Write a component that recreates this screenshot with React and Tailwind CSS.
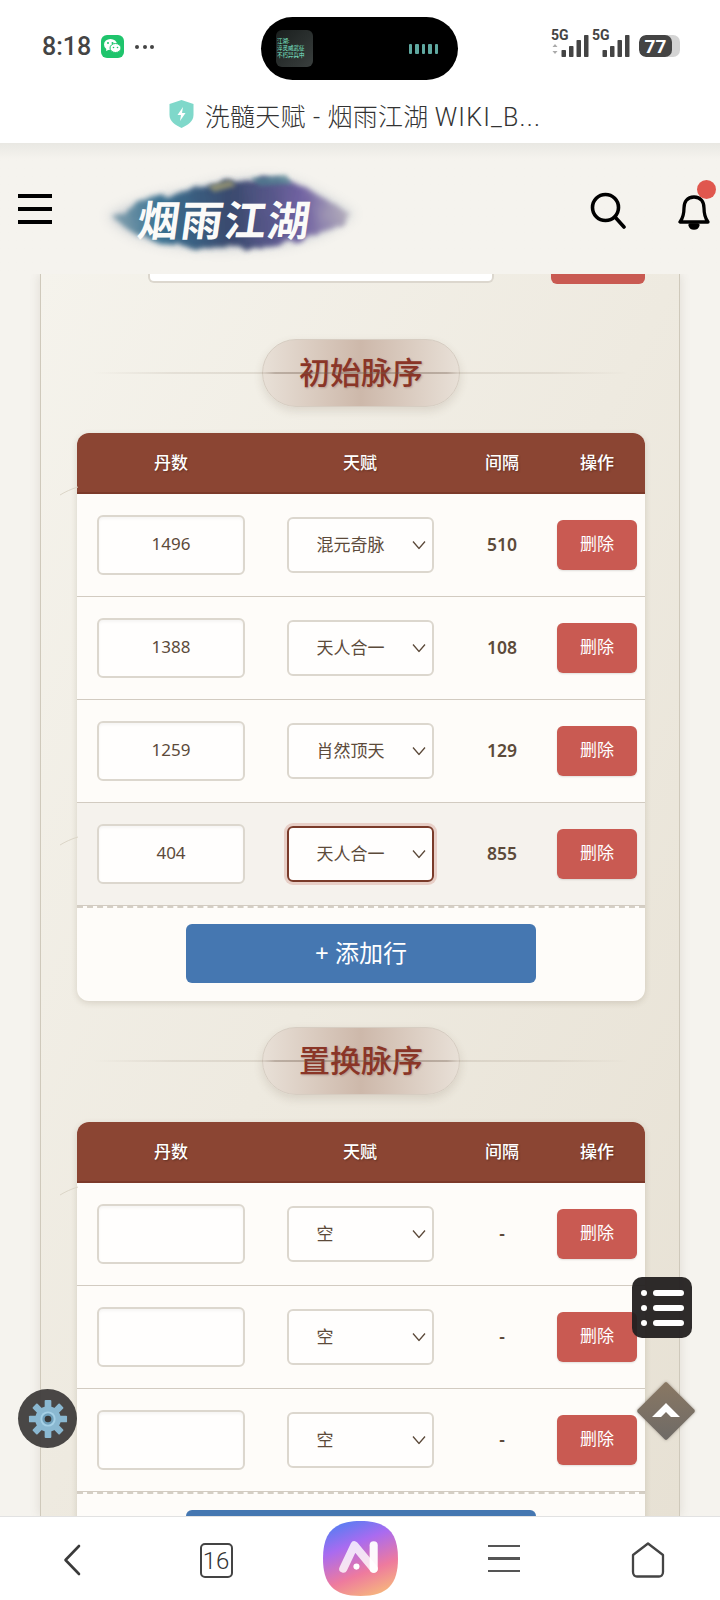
import React from 'react';

const firstRows = [
  { dan: '1496', talent: '混元奇脉', gap: '510' },
  { dan: '1388', talent: '天人合一', gap: '108' },
  { dan: '1259', talent: '肖然顶天', gap: '129' },
  { dan: '404', talent: '天人合一', gap: '855', active: true },
];

const swapRows = [
  { dan: '', talent: '空', gap: '-' },
  { dan: '', talent: '空', gap: '-' },
  { dan: '', talent: '空', gap: '-' },
];

const gridCols = 'grid grid-cols-[188px_190px_94px_96px] items-center';

const StatusBar = () => (
  <div className="grid h-[92px] grid-cols-[261px_197px_1fr] pt-[17px]">
    <div className="flex h-[63px] items-center pl-[42px] pb-[4px]">
      <span className="font-['Roboto',sans-serif] text-[25px] font-medium leading-none text-[#444444]">8:18</span>
      <div className="ml-[10px] flex h-[23px] w-[23px] items-center justify-center rounded-[6px] bg-[#1fc46c]">
        <svg width="19" height="17" viewBox="0 0 19 17">
          <ellipse cx="7.5" cy="6.5" rx="6.5" ry="5.5" fill="#fff" />
          <path d="M3.5 10 L3 13 L6.5 11.5Z" fill="#fff" />
          <ellipse cx="12.5" cy="10" rx="5.5" ry="4.5" fill="#fff" stroke="#1fc46c" strokeWidth="1" />
          <circle cx="5" cy="5" r="1" fill="#1fc46c" />
          <circle cx="9.5" cy="5" r="1" fill="#1fc46c" />
          <circle cx="10.5" cy="9.5" r="0.8" fill="#1fc46c" />
          <circle cx="14.5" cy="9.5" r="0.8" fill="#1fc46c" />
        </svg>
      </div>
      <div className="ml-[11px] flex gap-[3.5px]">
        <span className="h-[4px] w-[4px] rounded-full bg-[#444444]" />
        <span className="h-[4px] w-[4px] rounded-full bg-[#444444]" />
        <span className="h-[4px] w-[4px] rounded-full bg-[#444444]" />
      </div>
    </div>

    <div className="flex h-[63px] items-center justify-between rounded-full bg-black pl-[15px] pr-[20px]">
      <div className="flex h-[37px] w-[37px] flex-col justify-center rounded-[6px] bg-gradient-to-br from-[#1a1f1e] to-[#3a3f3e] pl-[1px] text-[5.5px] leading-[7px] text-[#7ff0d0]">
        <span>江湖:</span>
        <span className="whitespace-nowrap">淬灵威武征</span>
        <span className="whitespace-nowrap">不朽异兵中</span>
      </div>
      <div className="flex gap-[3px]">
        {[0, 1, 2, 3, 4].map((i) => (
          <span key={i} className="h-[10px] w-[3.5px] rounded-[1px] bg-[#5fa8a0]" />
        ))}
      </div>
    </div>

    <div className="relative h-[63px]">
      <svg className="absolute left-[93px] top-[9px]" width="84" height="33" viewBox="0 0 84 33">
        <text x="0" y="14" fontFamily="Roboto, sans-serif" fontSize="14" fontWeight="700" fill="#444">5G</text>
        <path d="M4 18 L6.500 21 L1.500 21Z M4 28 L6.500 25 L1.500 25Z" fill="#aaa" />
        <rect x="10.500" y="24" width="4.500" height="7" rx="0.8" fill="#444" />
        <rect x="18" y="20" width="4.500" height="11" rx="0.8" fill="#444" />
        <rect x="25.500" y="14" width="4.500" height="17" rx="0.8" fill="#444" />
        <rect x="33" y="9" width="4.500" height="22" rx="0.8" fill="#444" />
        <text x="41" y="14" fontFamily="Roboto, sans-serif" fontSize="14" fontWeight="700" fill="#444">5G</text>
        <rect x="51.500" y="24" width="4.500" height="7" rx="0.8" fill="#444" />
        <rect x="59" y="20" width="4.500" height="11" rx="0.8" fill="#444" />
        <rect x="66.500" y="14" width="4.500" height="17" rx="0.8" fill="#444" />
        <rect x="74" y="9" width="4.500" height="22" rx="0.8" fill="#444" />
      </svg>
      <div className="absolute left-[181px] top-[18px] flex h-[22px] w-[41px] overflow-hidden rounded-[7px] bg-[#d4d4d4]">
        <div className="flex w-[33px] items-center justify-center rounded-[7px] bg-[#444444] font-['Roboto',sans-serif] text-[19px] font-bold leading-none text-white">77</div>
      </div>
    </div>
  </div>
);

const TitleBar = () => (
  <div className="flex h-[51px] items-center justify-center bg-white pr-[10px]">
    <svg width="25" height="28" viewBox="0 0 25 28" className="mb-[8px]">
      <path d="M12.5 0 L24.500 4 V15 C24.500 21 19 25 12.500 28 C6 25 0.500 21 0.500 15 V4Z" fill="#7fd8ca" />
      <path d="M14 7 L8.500 15 H12 L11 21 L16.500 13 H13Z" fill="#fff" />
    </svg>
    <span className="ml-[11px] whitespace-nowrap font-['Roboto','Noto_Sans_CJK_SC',sans-serif] text-[25px] font-light leading-none tracking-[0.2px] text-[#333333]">
      洗髓天赋 <span className="mx-[1px]">-</span> 烟雨江湖 <span className="tracking-[1.2px]">WIKI_B...</span>
    </span>
  </div>
);

const Logo = () => (
  <svg width="260" height="85" viewBox="0 0 260 85" className="mt-[7px] overflow-visible">
    <defs>
      <linearGradient id="inkGrad" x1="0" x2="1" y1="0" y2="0">
        <stop offset="0" stopColor="#7d9cab" />
        <stop offset="0.2" stopColor="#2f6a8c" />
        <stop offset="0.5" stopColor="#2e3f66" />
        <stop offset="0.8" stopColor="#6a5a9e" />
        <stop offset="1" stopColor="#b9b3bd" />
      </linearGradient>
      <filter id="inkEdge" x="-10%" y="-30%" width="120%" height="160%">
        <feTurbulence type="fractalNoise" baseFrequency="0.06" numOctaves="3" seed="4" />
        <feDisplacementMap in="SourceGraphic" scale="12" />
        <feGaussianBlur stdDeviation="2.5" />
      </filter>
      <filter id="inkSoft" x="-20%" y="-40%" width="140%" height="180%">
        <feGaussianBlur stdDeviation="6" />
      </filter>
      <filter id="inkTop" x="-20%" y="-40%" width="140%" height="180%">
        <feGaussianBlur stdDeviation="2" />
      </filter>
    </defs>
    <path
      d="M8 46 C30 32 62 24 92 20 C108 12 150 6 184 9 C210 16 232 30 254 44 C230 66 190 78 150 78 C112 82 62 78 32 65 C22 60 12 52 8 46Z"
      fill="#9aa5b4"
      opacity="0.45"
      filter="url(#inkSoft)"
    />
    <path
      d="M12 46 C34 33 62 25 92 21 C108 11 150 3 184 9 C206 17 228 31 250 44 C226 63 190 77 150 77 C112 81 66 77 34 63 C26 57 18 52 12 46Z"
      fill="url(#inkGrad)"
      filter="url(#inkEdge)"
      opacity="0.92"
    />
    <path d="M108 16 L130 10 L136 16 L114 22Z" fill="#9c9a72" opacity="0.8" filter="url(#inkTop)" />
    <path d="M150 8 L186 5 L192 14 L160 16Z" fill="#4f8190" opacity="0.7" filter="url(#inkTop)" />
    <text
      x="36"
      y="66"
      fontFamily="'Noto Sans CJK SC', sans-serif"
      fontSize="42"
      fontWeight="700"
      fill="#fbfaf8"
      textLength="172"
      transform="skewX(-8) translate(9 0)"
    >
      烟雨江湖
    </text>
  </svg>
);

const SiteHeader = () => (
  <div className="relative z-10 flex h-[131px] items-center bg-gradient-to-b from-[#e9e8e3] via-[#f5f3ee] via-[16px] to-[#f5f3ee] pl-[18px]">
    <div className="flex w-[34px] flex-col gap-[9px]">
      <span className="h-[4px] bg-black" />
      <span className="h-[4px] bg-black" />
      <span className="h-[4px] bg-black" />
    </div>
    <div className="ml-[48px]">
      <Logo />
    </div>
    <svg className="ml-[230px] mt-[4px]" width="36" height="37" viewBox="0 0 36 37" fill="none" stroke="#000" strokeWidth="3.600" strokeLinecap="round">
      <circle cx="15.500" cy="15.500" r="13" />
      <path d="M25 25 L34 35" />
    </svg>
    <div className="relative ml-[52px] mt-[6px]">
      <svg width="32" height="36" viewBox="0 0 32 36" fill="none" stroke="#000" strokeWidth="3.300" strokeLinejoin="round">
        <path d="M16 3 C9 3 6 8 6 14 C6 20 5 24 2 28 H30 C27 24 26 20 26 14 C26 8 23 3 16 3Z" />
        <path d="M12 31 C13 35 19 35 20 31Z" fill="#000" />
      </svg>
      <span className="absolute -right-[6px] -top-[14px] h-[19px] w-[19px] rounded-full bg-[#e0574e]" />
    </div>
  </div>
);

const SectionTitle = ({ children, className }) => (
  <div className={`relative flex justify-center ${className}`}>
    <div className="flex h-[68px] w-[198px] items-center justify-center rounded-full border border-[#d6cdc2] bg-gradient-to-r from-[#e8e0d7] via-[#cdb8aa] to-[#e8e0d7] pb-[5px] shadow-[0_4px_10px_rgba(90,70,50,0.14)]">
      <span className="font-['Noto_Sans_CJK_SC',sans-serif] text-[31px] font-medium leading-none text-[#8a3527] [text-shadow:1px_1px_2px_rgba(90,40,30,0.25)]">
        {children}
      </span>
    </div>
    <div className="absolute left-[16px] right-[16px] top-[33px] h-[2px] bg-[linear-gradient(90deg,transparent,rgba(138,122,104,0.14)_15%,rgba(138,122,104,0.18)_32%,rgba(110,90,75,0.35)_34%,rgba(110,90,75,0.35)_66%,rgba(138,122,104,0.18)_68%,rgba(138,122,104,0.14)_85%,transparent)]" />
  </div>
);

const Chevron = () => (
  <svg className="pointer-events-none absolute right-[8px] top-1/2 -translate-y-1/2" width="14" height="9" viewBox="0 0 14 9" fill="none" stroke="#5c4a3a" strokeWidth="1.300">
    <path d="M1 1 L7 8 L13 1" />
  </svg>
);

const Row = ({ row }) => (
  <div className={`${gridCols} h-[103px] border-b border-[#d2cbc1] last:border-b-0 ${row.active ? 'bg-[#f5f2ed]' : ''}`}>
    <input
      type="text"
      defaultValue={row.dan}
      className="h-[60px] w-[148px] justify-self-center rounded-[6px] border-2 border-[#dcd7ce] bg-[#fffefd] pb-[3px] text-center text-[17px] text-[#5c4a3a] shadow-[inset_0_2px_3px_rgba(0,0,0,0.04)] outline-none"
    />
    <div className={`relative h-[56px] w-[147px] justify-self-center rounded-[6px] ${row.active ? 'shadow-[0_0_0_3px_#e8cfc7]' : ''}`}>
      <select
        defaultValue={row.talent}
        className={`h-full w-full appearance-none rounded-[6px] border-2 bg-[#fffefd] pl-[28px] text-[17px] text-[#5c4a3a] outline-none ${row.active ? 'border-[#7a3b2a]' : 'border-[#dcd7ce]'}`}
      >
        <option>{row.talent}</option>
      </select>
      <Chevron />
    </div>
    <div className="pb-[2px] text-center text-[17.500px] font-semibold text-[#5c4a3a]">{row.gap}</div>
    <button className="h-[50px] w-[80px] justify-self-center rounded-[6px] bg-[#c95a52] pb-[2px] text-[17px] text-white shadow-[0_1px_2px_rgba(0,0,0,0.12)]">
      删除
    </button>
  </div>
);

const TalentTable = ({ rows, className }) => (
  <div className={`w-[568px] overflow-hidden rounded-[12px] bg-[#fefcf9] shadow-[0_2px_6px_rgba(80,60,40,0.16)] ${className}`}>
    <div className={`${gridCols} h-[61px] border-b-2 border-[#7c3a2a] bg-[#8b4533] text-center text-[17px] font-medium text-white [text-shadow:1px_1px_2px_rgba(0,0,0,0.3)]`}>
      <span>丹数</span>
      <span>天赋</span>
      <span>间隔</span>
      <span>操作</span>
    </div>
    {rows.map((row, i) => (
      <Row key={i} row={row} />
    ))}
    <div className="flex h-[95px] justify-center border-t-2 border-dashed border-[#d5cfc5] pt-[16px]">
      <button className="h-[59px] w-[350px] rounded-[6px] bg-[#4577b1] pb-[2px] text-[24px] text-white">
        + 添加行
      </button>
    </div>
  </div>
);

const InkMark = ({ className }) => (
  <svg className={`absolute ${className}`} width="20" height="10" viewBox="0 0 20 10" fill="none" stroke="#dcd6c8" strokeWidth="1">
    <path d="M1 9 C6 6 12 3 19 1" />
  </svg>
);

const BottomBar = () => (
  <div className="relative z-10 grid h-[84px] grid-cols-5 items-center justify-items-center border-t border-[#e2e2e2] bg-white">
    <svg width="18" height="32" viewBox="0 0 18 32" fill="none" stroke="#3a3a3a" strokeWidth="2.600" strokeLinecap="round" strokeLinejoin="round" className="mt-[2px]">
      <path d="M16 2 L2.500 16 L16 30" />
    </svg>
    <div className="mt-[4px] flex h-[35px] w-[33px] items-center justify-center rounded-[5px] border-2 border-[#444444] font-['Roboto',sans-serif] text-[24px] font-light leading-none text-[#333333]">
      16
    </div>
    <svg width="75" height="75" viewBox="0 0 74 74">
      <defs>
        <linearGradient id="appGrad" x1="0.3" y1="0" x2="0.7" y2="1">
          <stop offset="0" stopColor="#5b7cf2" />
          <stop offset="0.3" stopColor="#a96bf0" />
          <stop offset="0.68" stopColor="#ee7a9e" />
          <stop offset="1" stopColor="#f6b57e" />
        </linearGradient>
      </defs>
      <path d="M37 0 C64 0 74 12 74 37 C74 62 64 74 37 74 C10 74 0 62 0 37 C0 12 10 0 37 0Z" fill="url(#appGrad)" />
      <path d="M20 47 L31 24 L50 47" fill="none" stroke="#fff" strokeOpacity="0.8" strokeWidth="8" strokeLinecap="round" strokeLinejoin="round" />
      <path d="M50 47 V24" fill="none" stroke="#fff" strokeOpacity="0.95" strokeWidth="8" strokeLinecap="round" />
      <circle cx="33" cy="45" r="3" fill="#fff" />
    </svg>
    <div className="flex w-[32px] flex-col gap-[10px]">
      <span className="h-[2.500px] bg-[#555555]" />
      <span className="h-[2.500px] bg-[#555555]" />
      <span className="h-[2.500px] bg-[#555555]" />
    </div>
    <svg width="34" height="36" viewBox="0 0 34 36" fill="none" stroke="#444" strokeWidth="2.300" strokeLinejoin="round" className="mt-[2px]">
      <path d="M2 13 L17 1.500 L32 13 V30 C32 33 30 34.500 28 34.500 H6 C4 34.500 2 33 2 30Z" />
    </svg>
  </div>
);

const GearButton = () => (
  <div className="absolute left-[18px] top-[1389px] z-20 flex h-[59px] w-[59px] items-center justify-center rounded-full bg-[#3f3d3c]/95">
    <svg width="40" height="40" viewBox="0 0 42 42">
      {[0, 45, 90, 135, 180, 225, 270, 315].map((deg) => (
        <rect key={deg} x="17.500" y="1" width="7" height="10" rx="1" fill="#8ab8d1" transform={`rotate(${deg} 21 21)`} />
      ))}
      <circle cx="21" cy="21" r="13.500" fill="#8ab8d1" />
      <circle cx="21" cy="21" r="8" fill="#a5d0e6" />
      <circle cx="21" cy="21" r="6" fill="#6f9fba" />
      <circle cx="21" cy="21" r="3.500" fill="#3a3a3a" />
    </svg>
  </div>
);

const ListButton = () => (
  <div className="absolute left-[632px] top-[1277px] z-20 flex h-[61px] w-[60px] flex-col justify-center gap-[9px] rounded-[10px] bg-[#232020]/95 pl-[9px]">
    {[0, 1, 2].map((i) => (
      <div key={i} className="flex items-center gap-[6px]">
        <span className="h-[6px] w-[6px] rounded-full bg-white" />
        <span className="h-[6px] w-[31px] rounded-full bg-white" />
      </div>
    ))}
  </div>
);

const TopButton = () => (
  <div className="absolute left-[636px] top-[1381px] z-20 flex h-[60px] w-[60px] items-center justify-center">
    <div className="absolute h-[42px] w-[42px] rotate-45 rounded-[2px] bg-gradient-to-br from-[#8a7863] to-[#6e6a66] shadow-[0_0_3px_rgba(90,80,70,0.5)]" />
    <svg className="relative mb-[2px]" width="28" height="14" viewBox="0 0 28 14">
      <path d="M14 0 L28 14 H19 L14 9 L9 14 H0Z" fill="#fff" />
    </svg>
  </div>
);

export default function App() {
  return (
    <div className="relative flex h-[1600px] w-[720px] flex-col overflow-hidden bg-[#f5f3ee] font-['Noto_Sans','Noto_Sans_CJK_SC',sans-serif]">
      <div className="relative z-10 h-[143px] bg-white">
        <StatusBar />
        <TitleBar />
      </div>
      <SiteHeader />

      <main className="relative min-h-0 flex-1 overflow-hidden px-[40px]">
        <div className="relative h-full border-x border-[#cfc9bb] bg-gradient-to-br from-[#f5f3ec] to-[#e7e1d4] pl-[36px] pr-[34px] shadow-[0_0_10px_rgba(90,80,60,0.14)]">
          <InkMark className="left-[18px] top-[212px]" />
          <InkMark className="left-[18px] top-[562px]" />
          <InkMark className="left-[18px] top-[912px]" />
          <div className="flex h-[10px] items-start">
            <div className="ml-[71px] h-[9px] w-[346px] rounded-b-[6px] border-x-2 border-b-2 border-[#dcd7ce] bg-white" />
            <div className="ml-[57px] h-[10px] w-[94px] rounded-b-[6px] bg-[#c95a52]" />
          </div>
          <SectionTitle className="mt-[55px]">初始脉序</SectionTitle>
          <TalentTable rows={firstRows} className="mt-[26px]" />
          <SectionTitle className="mt-[26px]">置换脉序</SectionTitle>
          <TalentTable rows={swapRows} className="mt-[27px]" />
        </div>
      </main>

      <BottomBar />
      <GearButton />
      <ListButton />
      <TopButton />
    </div>
  );
}
